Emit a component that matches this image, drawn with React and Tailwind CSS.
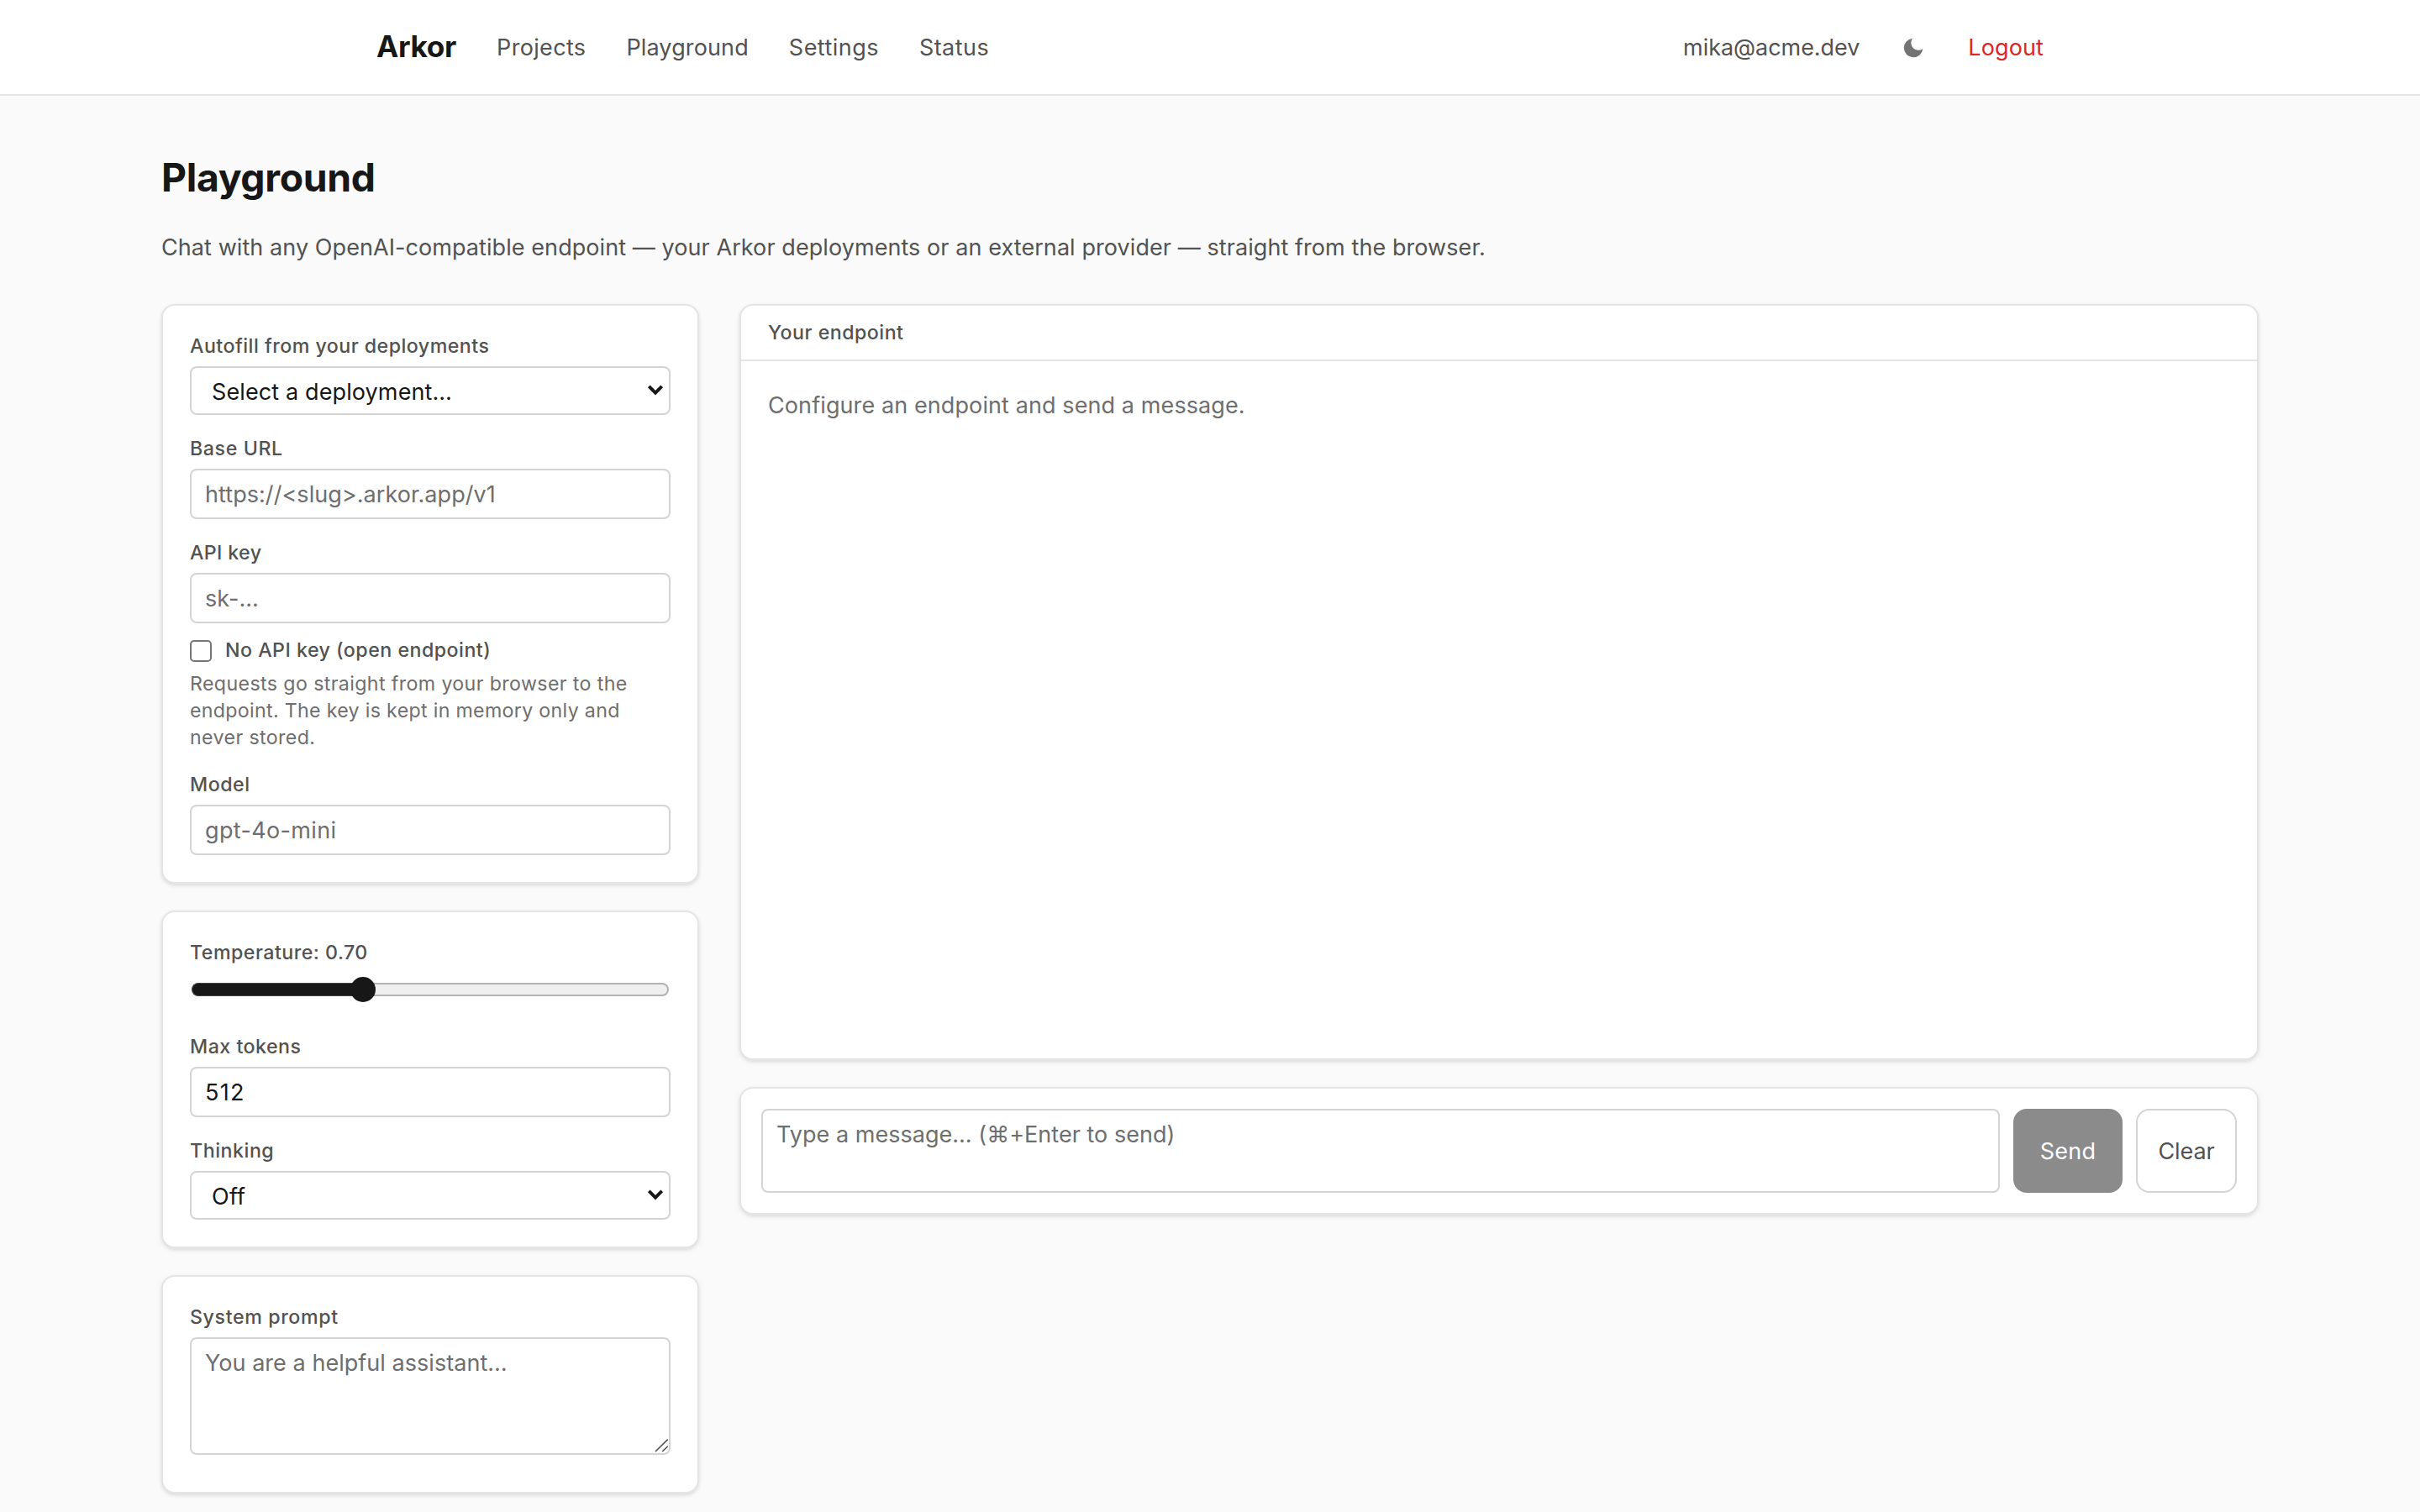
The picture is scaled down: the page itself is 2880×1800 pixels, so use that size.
const cardClass =
  "rounded-[16px] border-2 border-[#e5e5e5] bg-white shadow-[0_2px_6px_rgba(0,0,0,0.06),0_2px_4px_rgba(0,0,0,0.08)]";

function Card({ className = "", children }) {
  return <section className={`${cardClass} ${className}`}>{children}</section>;
}

function Label({ className = "tracking-[0.022em]", children }) {
  return (
    <div className={`whitespace-nowrap text-[23.2px] font-medium leading-8 text-[#525252] ${className}`}>{children}</div>
  );
}

function Field({ label, labelClass, children }) {
  return (
    <div className="flex flex-col gap-2">
      <Label className={labelClass}>{label}</Label>
      {children}
    </div>
  );
}

function TextBox({ className = "", children }) {
  return (
    <div
      className={`flex h-[60px] items-center whitespace-nowrap rounded-[8px] border-2 border-[#d4d4d4] bg-white px-4 pt-0.5 text-[27px] leading-10 ${className}`}
    >
      {children}
    </div>
  );
}

function SelectBox({ className = "", children }) {
  return (
    <div
      className={`flex h-[58px] items-center justify-between rounded-[8px] border-2 border-[#d4d4d4] bg-white pl-6 pr-1.5 text-[27px] leading-10 text-[#171717] ${className}`}
    >
      <span className="pt-1">{children}</span>
      <svg width="20" height="20" viewBox="0 0 20 20" fill="none" className="mb-0.5">
        <path d="M2.3 5.9 10 13.7 17.7 5.9" stroke="#171717" strokeWidth="3.8" />
      </svg>
    </div>
  );
}

function MoonIcon() {
  return (
    <svg width="30" height="30" viewBox="0 0 24 24" fill="#737373">
      <path d="M21 12.79A9 9 0 1 1 11.21 3 7 7 0 0 0 21 12.79z" />
    </svg>
  );
}

function Header() {
  return (
    <header className="h-[114px] border-b-2 border-[#e5e5e5] bg-white">
      <div className="mx-auto flex h-full w-[1984px] items-center justify-between text-[27px] leading-10 text-[#525252]">
        <nav className="flex items-center gap-12">
          <a className="pb-0.5 text-[35.2px] font-bold tracking-[-0.009em] text-[#171717]">Arkor</a>
          <a className="pt-0.5 tracking-[0.012em]">Projects</a>
          <a className="pt-0.5 tracking-[0.005em]">Playground</a>
          <a className="pt-0.5 tracking-[0.017em]">Settings</a>
          <a className="pt-0.5 tracking-[0.017em]">Status</a>
        </nav>
        <div className="flex items-center gap-12">
          <span className="mr-px pt-0.5 tracking-[-0.002em]">mika@acme.dev</span>
          <button className="flex h-8 w-8 items-center pt-0.5">
            <MoonIcon />
          </button>
          <button className="pt-0.5 tracking-[0.004em] text-[#dc2626]">Logout</button>
        </div>
      </div>
    </header>
  );
}

function Slider() {
  return (
    <div className="flex h-12 flex-col pb-3 pt-1">
      <div className="relative flex h-8 items-center px-0.5">
        <div className="h-4 w-[206px] rounded-l-full border-y border-l border-[#444444] bg-[#171717]" />
        <div className="h-4 flex-1 rounded-r-full border-y-2 border-r-2 border-[#b2b2b2] bg-[#efefef]" />
        <div className="absolute left-[191px] top-px h-[30px] w-[30px] rounded-full bg-[#171717]" />
      </div>
    </div>
  );
}

function ResizeGrip() {
  return (
    <svg width="16" height="16" viewBox="0 0 16 16" className="absolute bottom-px right-px" fill="none">
      <path d="M1 15 15.7 0.6M9.2 15 15.7 8.8" stroke="#525252" strokeWidth="1.6" />
    </svg>
  );
}

export default function App() {
  return (
    <div className="h-[1800px] w-[2880px] overflow-hidden bg-[#fafafa] font-['Inter','Liberation_Sans',sans-serif] text-[#171717]">
      <Header />
      <main className="px-48 pt-16">
        <h1 className="text-[46.3px] font-bold leading-[66px] tracking-[-0.007em]">Playground</h1>
        <p className="mt-[29px] text-[27px] leading-[44px] tracking-[0.0027em] text-[#525252]">
          Chat with any OpenAI-compatible endpoint — your Arkor deployments or an external provider — straight from the
          browser.
        </p>
        <div className="mt-[45px] grid grid-cols-[640px_1fr] items-start gap-12">
          <aside className="flex flex-col gap-8">
            <Card className="flex flex-col gap-6 p-8">
              <Field label="Autofill from your deployments" labelClass="tracking-[0.0205em]">
                <SelectBox className="tracking-[0.0043em]">Select a deployment…</SelectBox>
              </Field>
              <Field label="Base URL" labelClass="tracking-[0.026em]">
                <TextBox className="tracking-[0.002em] text-[#6e6e6e]">https://&lt;slug&gt;.arkor.app/v1</TextBox>
              </Field>
              <div>
                <Field label="API key" labelClass="tracking-[0.016em]">
                  <TextBox className="tracking-[0.002em] text-[#6e6e6e]">sk-…</TextBox>
                </Field>
                <label className="mt-4 flex items-center gap-4">
                  <span className="mt-0.5 h-[26px] w-[26px] rounded-[5px] border-2 border-[#767676] bg-white" />
                  <Label className="tracking-[0.021em]">No API key (open endpoint)</Label>
                </label>
                <p className="mt-2 text-[23.2px] leading-8 tracking-[0.0165em] text-[#6e6e6e]">
                  Requests go straight from your browser to the
                  <br />
                  <span className="tracking-[0.0135em]">endpoint. The key is kept in memory only and</span>
                  <br />
                  never stored.
                </p>
              </div>
              <Field label="Model" labelClass="tracking-[0.022em]">
                <TextBox className="tracking-[0.013em] text-[#6e6e6e]">gpt-4o-mini</TextBox>
              </Field>
            </Card>

            <Card className="flex flex-col gap-6 p-8">
              <Field label="Temperature: 0.70" labelClass="tracking-[0.021em]">
                <Slider />
              </Field>
              <Field label="Max tokens" labelClass="tracking-[0.021em]">
                <TextBox className="tracking-[0.05em]">512</TextBox>
              </Field>
              <Field label="Thinking" labelClass="tracking-[0.023em]">
                <SelectBox className="tracking-[0.01em]">Off</SelectBox>
              </Field>
            </Card>

            <Card className="p-8 pb-11">
              <Field label="System prompt" labelClass="tracking-[0.027em]">
                <div className="relative h-[140px] rounded-[8px] border-2 border-[#d4d4d4] px-4 pt-[9px] text-[27px] leading-10 tracking-[0.0015em] text-[#6e6e6e]">
                  You are a helpful assistant…
                  <ResizeGrip />
                </div>
              </Field>
            </Card>
          </aside>

          <div className="flex flex-col gap-8">
            <Card className="h-[900px]">
              <div className="border-b-2 border-[#e5e5e5] px-8 py-4">
                <Label className="tracking-[0.021em]">Your endpoint</Label>
              </div>
              <p className="px-8 pt-[33px] text-[27px] leading-10 tracking-[0.0036em] text-[#6e6e6e]">
                Configure an endpoint and send a message.
              </p>
            </Card>
            <Card className="flex gap-4 p-6">
              <div className="h-[100px] flex-1 rounded-[8px] border-2 border-[#d4d4d4] px-4 pt-[9px] text-[27px] leading-10 tracking-[0.001em] text-[#6e6e6e]">
                Type a message… (⌘+Enter to send)
              </div>
              <button className="w-[130px] rounded-[16px] bg-[#8b8b8b] pt-0.5 text-[27px] tracking-[0.008em] text-white">
                Send
              </button>
              <button className="w-[120px] rounded-[16px] border-2 border-[#d4d4d4] pt-0.5 text-[27px] tracking-[-0.004em] text-[#525252]">
                Clear
              </button>
            </Card>
          </div>
        </div>
      </main>
    </div>
  );
}
